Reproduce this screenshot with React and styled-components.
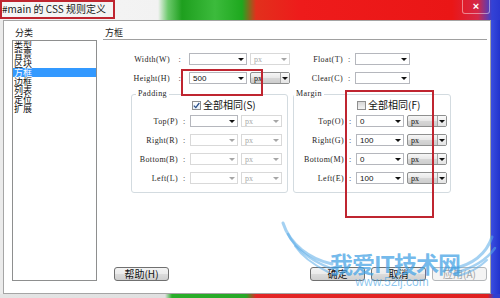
import React from "react";
import styled, { createGlobalStyle } from "styled-components";

const CJK = `"Noto Sans CJK SC", "Liberation Sans", sans-serif`;
const SERIF = `"Liberation Serif", "Noto Sans CJK SC", serif`;

const GlobalStyle = createGlobalStyle`
  html, body { margin: 0; padding: 0; background: #fff; }
  body { font-family: ${CJK}; }
`;

const Screen = styled.div`
  position: relative;
  width: 500px;
  height: 298px;
  overflow: hidden;
  display: flex;
  flex-direction: column;
  background: #fff;
`;

const TitleBar = styled.div`
  height: 20px;
  flex: none;
  display: flex;
  align-items: flex-start;
  background: linear-gradient(90deg, #f6f6f6 0, #f2f2f2 158px, #6cc96c 168px, #1e9f1e 182px, #3cbb3c 215px, #1ea81e 242px, #e2301c 256px, #ee1b1b 300px, #ea1616 452px, #d42848 478px, #3342d6 492px, #2a38d0 500px);
`;

const TitleText = styled.div`
  padding-left: 2px;
  font: 10px ${CJK};
  line-height: 18px;
  color: #1a1a1a;
  white-space: nowrap;
`;

const CloseBtn = styled.div`
  margin-left: auto;
  margin-right: 10px;
  width: 28px;
  height: 14px;
  box-sizing: border-box;
  border: 1px solid rgba(255, 255, 255, 0.45);
  border-top: none;
  border-radius: 0 0 3px 3px;
  color: #fff;
  font: bold 11px "Liberation Sans", sans-serif;
  line-height: 12px;
  text-align: center;
`;

const Middle = styled.div`
  height: 274px;
  flex: none;
  display: flex;
`;

const LeftEdge = styled.div`
  width: 3px;
  background: #ebebeb;
`;

const BlueEdge = styled.div`
  width: 9px;
  background: linear-gradient(90deg, #3a4ee0, #2233cc);
`;

const Dialog = styled.div`
  flex: 1;
  box-sizing: border-box;
  border: 1px solid #a5a5a5;
  background: #fff;
  display: grid;
  grid-template-columns: 85px 1fr;
  column-gap: 6px;
  padding: 6px 3px 12px 8px;
`;

const Sidebar = styled.div`
  display: flex;
  flex-direction: column;
`;

const SectionTitle = styled.div`
  height: 13px;
  padding-left: 3px;
  font: 9px ${CJK};
  line-height: 12px;
  color: #1a1a1a;
`;

const CategoryList = styled.div`
  flex: 1;
  border: 1px solid #8e8f8f;
  background: #fff;
`;

const CategoryItem = styled.div`
  height: 9px;
  padding-left: 1px;
  font: 9px ${CJK};
  line-height: 9px;
  color: ${(p) => (p.$active ? "#fff" : "#111")};
  background: ${(p) => (p.$active ? "#3399ff" : "transparent")};
`;

const Panel = styled.div`
  display: flex;
  flex-direction: column;
`;

const PanelHeader = styled.div`
  height: 12px;
  padding-left: 2px;
  border-bottom: 1px solid #a0a0a0;
  font: 9px ${CJK};
  line-height: 11px;
  color: #1a1a1a;
`;

const Columns = styled.div`
  display: grid;
  grid-template-columns: 187px 1fr;
  padding-top: 13px;
`;

const Column = styled.div`
  display: flex;
  flex-direction: column;
`;

const FieldRow = styled.div`
  display: grid;
  grid-template-columns: ${(p) => p.$cols};
  column-gap: 3px;
  align-items: center;
  height: 12px;
  margin-top: ${(p) => p.$top ?? 7}px;
`;

const Label = styled.span`
  text-align: right;
  font: 8px ${SERIF};
  letter-spacing: 0.4px;
  color: #1e1e1e;
  white-space: nowrap;
`;

const Colon = styled.span`
  text-align: center;
  font: 8px ${SERIF};
  color: #1e1e1e;
`;

const Select = styled.div`
  height: 12px;
  box-sizing: border-box;
  display: flex;
  align-items: center;
  padding-left: 3px;
  border: 1px solid ${(p) => (p.$variant === "button" ? "#8e8f8f" : p.$variant === "muted" ? "#d9d9d9" : "#b5b7bd")};
  border-radius: ${(p) => (p.$variant === "button" ? "2px" : "0")};
  background: ${(p) =>
    p.$variant === "button"
      ? "linear-gradient(#f6f6f6, #e9e9e9 45%, #d6d6d6 55%, #cdcdcd)"
      : "#fff"};
  font: 8px ${(p) => (p.$serif ? SERIF : `"Liberation Sans", sans-serif`)};
  color: ${(p) => (p.$variant === "muted" ? "#a8a8a8" : "#111")};
`;

const Value = styled.span`
  flex: 1;
  white-space: nowrap;
`;

const ArrowBox = styled.span`
  width: ${(p) => (p.$boxed ? 9 : 11)}px;
  height: 100%;
  display: flex;
  align-items: center;
  justify-content: center;
  box-sizing: border-box;
  border-left: ${(p) => (p.$boxed ? "1px solid #a7a7a7" : "none")};
  background: ${(p) => (p.$boxed ? "linear-gradient(#fafafa, #e4e4e4)" : "transparent")};
  &::after {
    content: "";
    border-left: 3px solid transparent;
    border-right: 3px solid transparent;
    border-top: 3px solid ${(p) => (p.$muted ? "#a6a6a6" : "#111")};
  }
`;

const Group = styled.fieldset`
  margin: 5px 0 0 ${(p) => p.$left}px;
  width: ${(p) => p.$width}px;
  box-sizing: border-box;
  min-width: 0;
  padding: 1px 0 8px;
  border: 1px solid #d3dbe0;
  border-radius: 3px;
`;

const Legend = styled.legend`
  margin-left: ${(p) => p.$offset}px;
  padding: 0 2px;
  font: 8px ${SERIF};
  letter-spacing: 0.4px;
  line-height: 10px;
  color: #1e1e1e;
`;

const CheckRow = styled.div`
  height: 10px;
  display: flex;
  align-items: center;
  gap: 2px;
  padding-left: ${(p) => p.$indent}px;
  font: 10px ${CJK};
  line-height: 10px;
  color: #111;
`;

const Box = styled.span`
  width: 9px;
  height: 9px;
  box-sizing: border-box;
  border: 1px solid #8f8f8f;
  background: ${(p) => (p.$checked ? "linear-gradient(#fdfdfd, #e9f1f8)" : "linear-gradient(#d6d6d6, #f4f4f4)")};
  display: flex;
  align-items: center;
  justify-content: center;
`;

const ButtonRow = styled.div`
  margin-top: auto;
  display: flex;
  align-items: center;
  padding-left: 11px;
`;

const ButtonGroup = styled.div`
  margin-left: auto;
  display: flex;
  gap: 6px;
`;

const Button = styled.div`
  width: 55px;
  height: 14px;
  box-sizing: border-box;
  border: 1px solid ${(p) => (p.$disabled ? "#b3b6b9" : "#707070")};
  border-radius: 3px;
  background: ${(p) =>
    p.$disabled ? "#f4f4f4" : "linear-gradient(#f3f3f3, #ebebeb 50%, #dcdcdc 50%, #cfcfcf)"};
  font: 10px ${CJK};
  line-height: 12px;
  text-align: center;
  color: ${(p) => (p.$disabled ? "#a3a3a3" : "#111")};
`;

const BottomStrip = styled.div`
  flex: 1;
  background: linear-gradient(90deg, #e4e4e4 0, #e0e0e0 165px, #2aae2a 172px, #27a827 246px, #e32626 256px, #df2020 488px, #3040d0 494px);
`;

const Annotation = styled.div`
  position: absolute;
  left: ${(p) => p.$x}px;
  top: ${(p) => p.$y}px;
  width: ${(p) => p.$w}px;
  height: ${(p) => p.$h}px;
  box-sizing: border-box;
  border: 2px solid #bf2530;
  pointer-events: none;
`;

const Watermark = styled.div`
  position: absolute;
  left: 280px;
  top: 215px;
  width: 220px;
  height: 83px;
  pointer-events: none;
  display: flex;
  flex-direction: column;
  align-items: center;
  padding-top: 35px;
  box-sizing: border-box;
  svg { position: absolute; left: 0; top: 0; }
`;

const MarkTitle = styled.span`
  position: relative;
  font: bold 23px ${CJK};
  line-height: 26px;
  letter-spacing: -1px;
  color: rgba(64, 160, 228, 0.72);
  margin-left: 10px;
`;

const MarkSite = styled.span`
  position: relative;
  font: 12px "Liberation Sans", sans-serif;
  line-height: 12px;
  color: rgba(64, 160, 228, 0.6);
  margin-left: 4px;
`;

function Combo({ value = "", cols, muted, serif, variant }) {
  return (
    <Select $variant={variant ?? (muted ? "muted" : "field")} $serif={serif}>
      <Value>{value}</Value>
      <ArrowBox $muted={muted} $boxed={variant === "button"} />
    </Select>
  );
}

const categories = ["类型", "背景", "区块", "方框", "边框", "列表", "定位", "扩展"];

export default function App() {
  return (
    <>
      <GlobalStyle />
      <Screen>
        <TitleBar>
          <TitleText>#main 的 CSS 规则定义</TitleText>
          <CloseBtn>×</CloseBtn>
        </TitleBar>
        <Middle>
          <LeftEdge />
          <Dialog>
            <Sidebar>
              <SectionTitle>分类</SectionTitle>
              <CategoryList>
                {categories.map((c) => (
                  <CategoryItem key={c} $active={c === "方框"}>
                    {c}
                  </CategoryItem>
                ))}
              </CategoryList>
            </Sidebar>
            <Panel>
              <PanelHeader>方框</PanelHeader>
              <Columns>
                <Column>
                  <FieldRow $cols="67px 13px 58px 40px" $top={0}>
                    <Label>Width(W)</Label>
                    <Colon>:</Colon>
                    <Combo />
                    <Combo value="px" muted serif />
                  </FieldRow>
                  <FieldRow $cols="67px 13px 58px 40px">
                    <Label>Height(H)</Label>
                    <Colon>:</Colon>
                    <Combo value="500" />
                    <Combo value="px" serif variant="button" />
                  </FieldRow>
                  <Group $left={28} $width={157}>
                    <Legend $offset={4}>Padding</Legend>
                    <CheckRow $indent={60}>
                      <Box $checked>
                        <svg width="7" height="7" viewBox="0 0 7 7">
                          <path d="M0.8 3.6 L2.8 5.6 L6.3 1" fill="none" stroke="#2a4f8a" strokeWidth="1.3" />
                        </svg>
                      </Box>
                      全部相同(S)
                    </CheckRow>
                    {[
                      ["Top(P)", false],
                      ["Right(R)", true],
                      ["Bottom(B)", true],
                      ["Left(L)", true],
                    ].map(([l, m], i) => (
                      <FieldRow key={l} $cols="46px 6px 48px 41px" $top={i === 0 ? 5 : 7}>
                        <Label>{l}</Label>
                        <Colon>:</Colon>
                        <Combo muted={m} />
                        <Combo value="px" muted serif />
                      </FieldRow>
                    ))}
                  </Group>
                </Column>
                <Column>
                  <FieldRow $cols="53px 6px 55px" $top={0}>
                    <Label>Float(T)</Label>
                    <Colon>:</Colon>
                    <Combo />
                  </FieldRow>
                  <FieldRow $cols="53px 6px 55px">
                    <Label>Clear(C)</Label>
                    <Colon>:</Colon>
                    <Combo />
                  </FieldRow>
                  <Group $left={3} $width={158}>
                    <Legend $offset={0}>Margin</Legend>
                    <CheckRow $indent={63}>
                      <Box />
                      全部相同(F)
                    </CheckRow>
                    {[
                      ["Top(O)", "0"],
                      ["Right(G)", "100"],
                      ["Bottom(M)", "0"],
                      ["Left(E)", "100"],
                    ].map(([l, v], i) => (
                      <FieldRow key={l} $cols="50px 6px 48px 40px" $top={i === 0 ? 5 : 7}>
                        <Label>{l}</Label>
                        <Colon>:</Colon>
                        <Combo value={v} />
                        <Combo value="px" serif variant="button" />
                      </FieldRow>
                    ))}
                  </Group>
                </Column>
              </Columns>
              <ButtonRow>
                <Button>帮助(H)</Button>
                <ButtonGroup>
                  <Button>确定</Button>
                  <Button>取消</Button>
                  <Button $disabled>应用(A)</Button>
                </ButtonGroup>
              </ButtonRow>
            </Panel>
          </Dialog>
          <BlueEdge />
        </Middle>
        <BottomStrip />

        <Watermark>
          <svg width="220" height="83" viewBox="0 0 220 83">
            <g fill="none" stroke="rgba(90,172,232,0.55)" strokeLinecap="round">
              <path d="M3 8 C10 30 30 44 52 49" strokeWidth="3" />
              <path d="M8 19 C16 35 32 46 50 53" strokeWidth="2.5" />
              <path d="M15 31 C23 43 36 51 48 57" strokeWidth="2" />
              <path d="M212 22 C206 40 191 50 172 54" strokeWidth="3" />
              <path d="M215 33 C206 46 193 53 175 58" strokeWidth="2.5" />
              <path d="M207 45 C199 53 189 58 178 61" strokeWidth="2" />
            </g>
          </svg>
          <MarkTitle>我爱IT技术网</MarkTitle>
          <MarkSite>www.52ij.com</MarkSite>
        </Watermark>

        <Annotation $x={0} $y={0} $w={115} $h={19} />
        <Annotation $x={181} $y={69} $w={82} $h={27} />
        <Annotation $x={345} $y={90} $w={89} $h={128} />
      </Screen>
    </>
  );
}
